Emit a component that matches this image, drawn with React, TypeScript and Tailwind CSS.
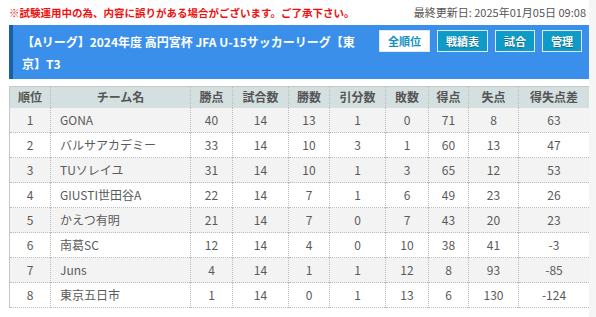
const rows = [
  [1, 'GONA', 40, 14, 13, 1, 0, 71, 8, 63],
  [2, 'バルサアカデミー', 33, 14, 10, 3, 1, 60, 13, 47],
  [3, 'TUソレイユ', 31, 14, 10, 1, 3, 65, 12, 53],
  [4, 'GIUSTI世田谷A', 22, 14, 7, 1, 6, 49, 23, 26],
  [5, 'かえつ有明', 21, 14, 7, 0, 7, 43, 20, 23],
  [6, '南葛SC', 12, 14, 4, 0, 10, 38, 41, -3],
  [7, 'Juns', 4, 14, 1, 1, 12, 8, 93, -85],
  [8, '東京五日市', 1, 14, 0, 1, 13, 6, 130, -124],
]

const heads = ['順位', 'チーム名', '勝点', '試合数', '勝数', '引分数', '敗数', '得点', '失点', '得失点差']
const widths = ['w-[41px]', 'w-[140px]', 'w-[42px]', 'w-[56px]', 'w-[41px]', 'w-[56px]', 'w-[43px]', 'w-[40px]', 'w-[50px]', 'w-[71px]']

function NavButton({ label, active }: { label: string; active?: boolean }) {
  return (
    <button
      className={`shrink-0 whitespace-nowrap h-[22px] px-[8px] border border-[#dfe9ef] text-[11px] font-bold leading-none ${
        active ? 'bg-white text-[#1890c0]' : 'bg-[#0e9bc8] text-white [text-shadow:0_1px_1px_rgba(0,0,0,0.35)]'
      }`}
    >
      {label}
    </button>
  )
}

export default function App() {
  return (
    <div className="flex w-[596px] h-[317px] bg-white font-['Noto_Sans_CJK_JP',sans-serif] overflow-hidden">
      <div className="w-[589px] pl-[9px] shrink-0">
        <div className="flex items-center justify-between h-[25px] pr-[3px]">
          <span className="text-[#ee1111] font-bold text-[10.5px]">※試験運用中の為、内容に誤りがある場合がございます。ご了承下さい。</span>
          <span className="text-[#555] text-[11px]">最終更新日: 2025年01月05日 09:08</span>
        </div>
        <div className="flex items-start h-[54px] bg-[#3a8fea] border-l-[4px] border-[#1b5fa6]">
          <h1 className="w-[366px] shrink-0 pl-[9px] pr-[8px] pt-[6px] text-[12px] leading-[22px] font-bold text-white">
            【Aリーグ】2024年度 高円宮杯 JFA U-15サッカーリーグ【東京】T3
          </h1>
          <div className="flex gap-[7px] mt-[5px]">
            <NavButton label="全順位" active />
            <NavButton label="戦績表" />
            <NavButton label="試合" />
            <NavButton label="管理" />
          </div>
        </div>
        <table className="mt-[7px] w-[580px] border-collapse table-fixed text-[12px] text-[#5a5a5a] border-l border-r border-[#c8c8c8]">
          <thead>
            <tr className="h-[21px] bg-[#d4dfdf] border-t border-[#c8c8c8]">
              {heads.map((h, i) => (
                <th
                  key={h}
                  className={`${widths[i]} font-bold text-[#555] border-r border-dotted border-[#bbb] last:border-r-0 p-0`}
                >
                  {h}
                </th>
              ))}
            </tr>
          </thead>
          <tbody>
            {rows.map((r, ri) => (
              <tr key={ri} className={`h-[25px] border-b border-dotted border-[#bbb] ${ri % 2 === 0 ? 'bg-[#f3f3f3]' : 'bg-white'}`}>
                {r.map((c, ci) => (
                  <td
                    key={ci}
                    className={`p-0 border-r border-dotted border-[#bbb] last:border-r-0 ${ci === 1 ? 'text-left pl-[9px]' : 'text-center'}`}
                  >
                    {c}
                  </td>
                ))}
              </tr>
            ))}
          </tbody>
        </table>
      </div>
      <div className="flex-1 bg-[#f5f5f5]" />
    </div>
  )
}
